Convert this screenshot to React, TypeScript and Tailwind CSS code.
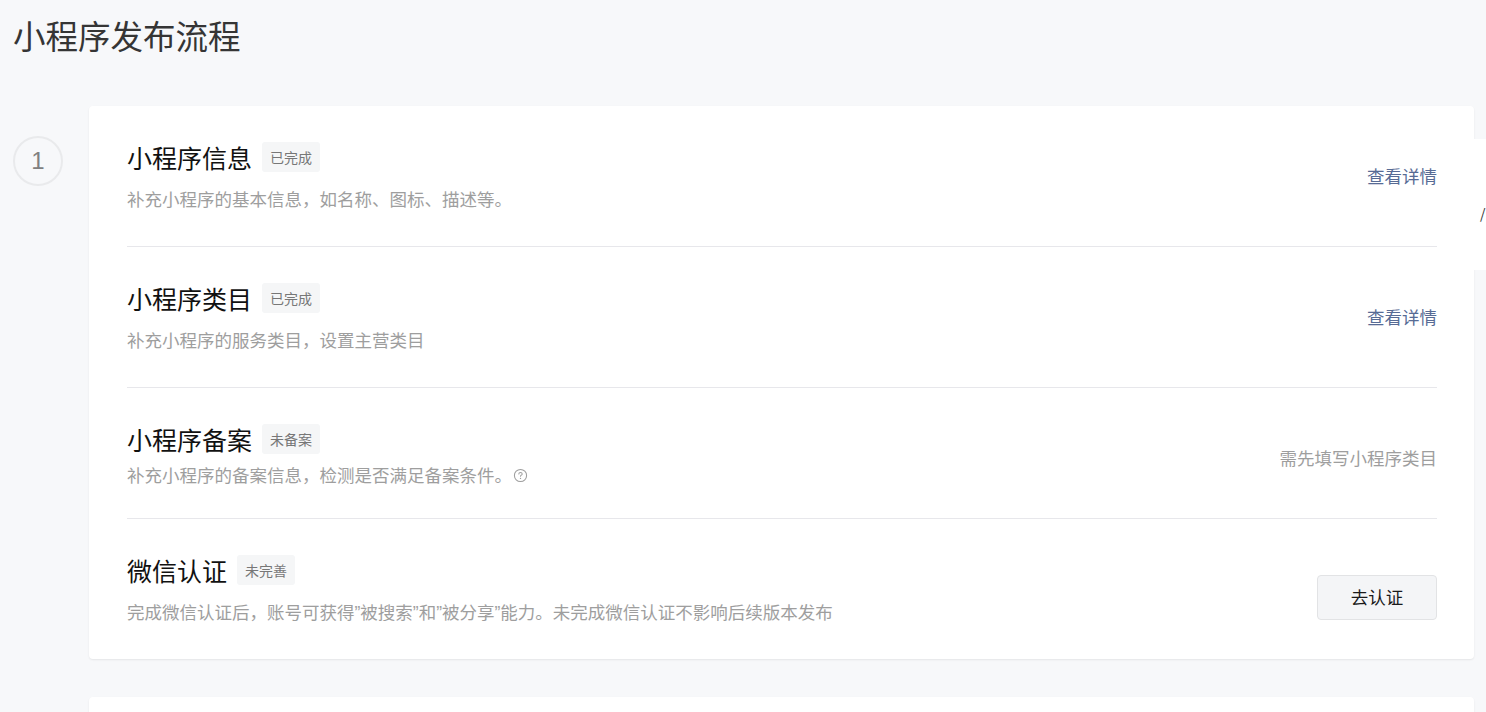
import { ReactNode } from 'react'

const font = { fontFamily: '"Noto Sans CJK SC", "Noto Sans", sans-serif' }

interface StepRowProps {
  title: string
  badge: string
  desc: ReactNode
  action: ReactNode
  descGap?: string
  bottom?: string
  actionOffset?: string
  last?: boolean
}

function StepRow({ title, badge, desc, action, descGap = 'mt-[15px]', bottom = 'pb-[35px]', actionOffset = '', last }: StepRowProps) {
  return (
    <div className={`flex items-center justify-between pt-[36px] ${bottom} ${last ? '' : 'border-b border-[#e7e7eb]'}`}>
      <div>
        <div className="flex items-center h-[30px]">
          <span className="text-[25px] leading-[30px] text-[#111]">{title}</span>
          <span className="ml-[10px] h-[30px] px-[8px] flex items-center rounded-[3px] bg-[#f5f6f7] text-[14px] text-[#777]">
            {badge}
          </span>
        </div>
        <div className={`${descGap} text-[17.5px] leading-[24px] text-[#9e9e9e] flex items-center`}>{desc}</div>
      </div>
      <div className={actionOffset}>{action}</div>
    </div>
  )
}

function HelpIcon() {
  return (
    <svg width="15" height="15" viewBox="0 0 16 16" className="ml-[1px]" fill="none">
      <circle cx="8" cy="8" r="6.5" stroke="#9e9e9e" strokeWidth="1.1" />
      <path d="M6.2 6.4c0-1 .8-1.7 1.8-1.7s1.8.7 1.8 1.6c0 .8-.6 1.1-1.1 1.4-.5.3-.7.6-.7 1.2" stroke="#9e9e9e" strokeWidth="1.1" strokeLinecap="round" />
      <circle cx="8" cy="11.1" r=".7" fill="#9e9e9e" />
    </svg>
  )
}

function Q() {
  return <span style={{ fontFamily: '"Liberation Sans", sans-serif' }}>”</span>
}

export default function App() {
  const link = <span className="text-[17.5px] text-[#576b95] cursor-pointer">查看详情</span>

  return (
    <div className="relative h-[712px] overflow-hidden bg-[#f7f8fa] pl-[13px] pr-[12px] pt-[14px]" style={font}>
      <h1 className="text-[32.5px] leading-[42px] text-[#353535] font-normal">小程序发布流程</h1>

      <div className="mt-[50px] flex gap-[26px]">
        <div
          className="w-[50px] h-[50px] mt-[30px] shrink-0 rounded-full border-2 border-[#e9eaec] flex items-center justify-center text-[24px] text-[#808080]"
          style={{ fontFamily: '"Liberation Sans", sans-serif' }}
        >
          1
        </div>
        <div className="flex-1 bg-white rounded-[4px] shadow-[0_1px_2px_rgba(0,0,0,0.08)] pr-[37px] pl-[38px]">
          <StepRow title="小程序信息" badge="已完成" desc="补充小程序的基本信息，如名称、图标、描述等。" action={link} />
          <StepRow title="小程序类目" badge="已完成" desc="补充小程序的服务类目，设置主营类目" action={link} />
          <StepRow
            title="小程序备案"
            badge="未备案"
            descGap="mt-[9px]"
            bottom="pb-[31px]"
            actionOffset="mt-[6px]"
            desc={
              <>
                补充小程序的备案信息，检测是否满足备案条件。
                <HelpIcon />
              </>
            }
            action={<span className="text-[17.5px] text-[#9e9e9e]">需先填写小程序类目</span>}
          />
          <StepRow
            title="微信认证"
            badge="未完善"
            descGap="mt-[15px]"
            bottom="pb-[34px]"
            actionOffset="mt-[14px]"
            last
            desc={
              <span>
                完成微信认证后，账号可获得<Q />被搜索<Q />和<Q />被分享<Q />能力。未完成微信认证不影响后续版本发布
              </span>
            }
            action={
              <button className="w-[120px] h-[45px] rounded-[4px] border border-[#e2e3e5] bg-[#f4f5f7] text-[17.5px] text-[#1a1a1a]">
                去认证
              </button>
            }
          />
        </div>
      </div>

      <div className="mt-[38px] ml-[76px] h-[60px] bg-white rounded-[4px] shadow-[0_1px_2px_rgba(0,0,0,0.08)]" />

      <div className="absolute right-0 top-[139px] w-[12px] h-[131px] bg-white overflow-hidden">
        <span className="absolute left-[6px] top-[64px] text-[14px] leading-[20px] text-[#333]">/</span>
      </div>
    </div>
  )
}
